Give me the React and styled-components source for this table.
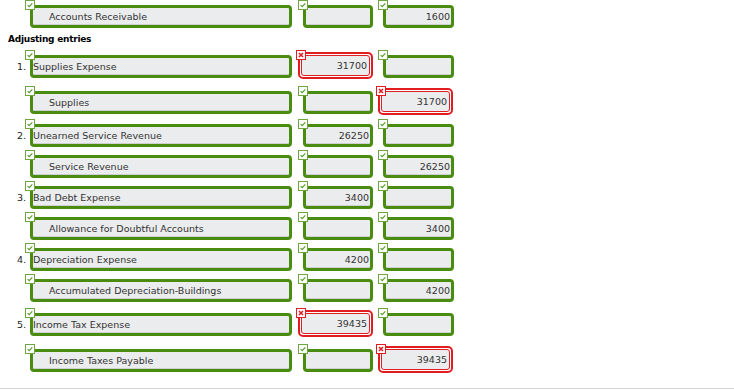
import React from "react";
import styled, { createGlobalStyle } from "styled-components";

const GREEN = "#4a8c0f";
const RED = "#e21d22";
const FILL = "#ebecee";

const Global = createGlobalStyle`
  html, body { margin: 0; padding: 0; background: #ffffff; }
  body { font-family: "DejaVu Sans", Verdana, sans-serif; }
`;

const Page = styled.div`
  width: 734px;
  height: 390px;
  padding-top: 5px;
  box-sizing: border-box;
  display: flex;
  flex-direction: column;
  overflow: hidden;
`;

const List = styled.div`
  display: flex;
  flex-direction: column;
  gap: 8px;
`;

const Heading = styled.div`
  margin: -3px 0 -1px 8px;
  height: 12px;
  line-height: 12px;
  font-size: 9px;
  font-weight: bold;
  letter-spacing: -0.25px;
  color: #000;
`;

const Row = styled.div`
  display: grid;
  grid-template-columns: 30px 273px 80px 71px;
  align-items: center;
  padding-top: ${(p) => (p.$red ? "3px" : "0")};
  padding-bottom: ${(p) => (p.$red ? "2px" : "0")};
`;

const Num = styled.div`
  padding-right: 4px;
  text-align: right;
  font-size: 9.5px;
  color: #222;
`;

const Cell = styled.div`
  position: relative;
  width: ${(p) => p.$w}px;
  height: 23px;
`;

const Box = styled.div`
  box-sizing: border-box;
  width: 100%;
  height: 23px;
  border: 3px solid ${GREEN};
  border-radius: 4px;
  background: ${FILL};
  box-shadow: inset 0 -1px 0 #cfd0d2;
  display: flex;
  align-items: center;
  justify-content: ${(p) => (p.$right ? "flex-end" : "flex-start")};
  padding: ${(p) => (p.$right ? "0 1px 0 0" : p.$indent ? "0 0 0 16px" : "0 0 0 0")};
  font-size: 9.5px;
  color: #333;
  white-space: nowrap;
`;

const RedFrame = styled.div`
  position: absolute;
  box-sizing: border-box;
  left: -5px;
  top: -3px;
  width: 75px;
  height: 27px;
  border: 2px solid ${RED};
  border-radius: 5px;
  padding: 1px;
  background: #fff;
`;

const RedInner = styled.div`
  box-sizing: border-box;
  height: 100%;
  border: 1px solid ${RED};
  border-radius: 3px;
  background: ${FILL};
  display: flex;
  align-items: center;
  justify-content: flex-end;
  padding-right: 2px;
  font-size: 9.5px;
  color: #333;
`;

const Badge = styled.svg`
  position: absolute;
  left: ${(p) => (p.$red ? "-7px" : "-5px")};
  top: ${(p) => (p.$red ? "-5px" : "-5px")};
  width: 10px;
  height: 10px;
  z-index: 2;
`;

const Rule = styled.div`
  margin-top: 14px;
  height: 1px;
  background: #cdd3d7;
`;

function Check() {
  return (
    <Badge viewBox="0 0 10 10">
      <rect x="0.5" y="0.5" width="9" height="9" fill="#fff" stroke="#6ea53f" strokeWidth="1" />
      <path d="M2.6 5.1 L4.2 6.6 L7.3 3.4" fill="none" stroke="#5a9e2c" strokeWidth="1.2" />
    </Badge>
  );
}

function Cross() {
  return (
    <Badge $red viewBox="0 0 10 10">
      <rect x="0.5" y="0.5" width="9" height="9" fill="#fff" stroke={RED} strokeWidth="1" />
      <path d="M3 3 L7 7 M7 3 L3 7" fill="none" stroke={RED} strokeWidth="1.6" />
    </Badge>
  );
}

function Amount({ value, red, width }) {
  return (
    <Cell $w={width}>
      {red ? (
        <RedFrame>
          <RedInner>{value}</RedInner>
        </RedFrame>
      ) : (
        <Box $right>{value}</Box>
      )}
      {red ? <Cross /> : <Check />}
    </Cell>
  );
}

function Entry({ n, name, indent, d, c, dRed, cRed }) {
  return (
    <Row $red={dRed || cRed}>
      <Num>{n}</Num>
      <Cell $w={262}>
        <Box $indent={indent}>{name}</Box>
        <Check />
      </Cell>
      <Amount value={d} red={dRed} width={70} />
      <Amount value={c} red={cRed} width={71} />
    </Row>
  );
}

const entries = [
  { n: "1.", name: "Supplies Expense", d: "31700", c: "", dRed: true },
  { name: "Supplies", indent: true, d: "", c: "31700", cRed: true },
  { n: "2.", name: "Unearned Service Revenue", d: "26250", c: "" },
  { name: "Service Revenue", indent: true, d: "", c: "26250" },
  { n: "3.", name: "Bad Debt Expense", d: "3400", c: "" },
  { name: "Allowance for Doubtful Accounts", indent: true, d: "", c: "3400" },
  { n: "4.", name: "Depreciation Expense", d: "4200", c: "" },
  { name: "Accumulated Depreciation-Buildings", indent: true, d: "", c: "4200" },
  { n: "5.", name: "Income Tax Expense", d: "39435", c: "", dRed: true },
  { name: "Income Taxes Payable", indent: true, d: "", c: "39435", cRed: true },
];

export default function App() {
  return (
    <>
      <Global />
      <Page>
        <List>
          <Entry name="Accounts Receivable" indent d="" c="1600" />
          <Heading>Adjusting entries</Heading>
          {entries.map((e, i) => (
            <Entry key={i} {...e} />
          ))}
        </List>
        <Rule />
      </Page>
    </>
  );
}
